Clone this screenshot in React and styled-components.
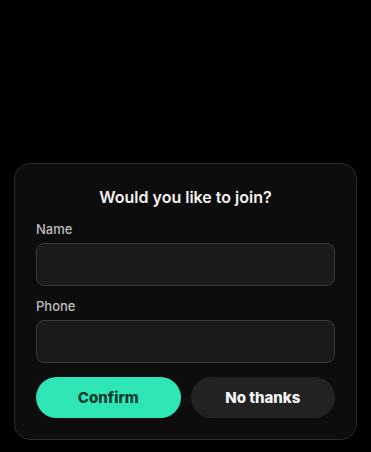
import styled, { createGlobalStyle } from 'styled-components';

const GlobalStyle = createGlobalStyle`
  html, body {
    margin: 0;
    padding: 0;
    background: #000;
  }
  body {
    font-family: Inter, "Noto Sans", "Liberation Sans", sans-serif;
  }
`;

const Screen = styled.div`
  width: 371px;
  height: 452px;
  background: #000;
  display: flex;
  flex-direction: column;
  justify-content: flex-end;
  align-items: center;
  padding-bottom: 12px;
  box-sizing: border-box;
`;

const Card = styled.div`
  width: 343px;
  box-sizing: border-box;
  background: #0d0d0d;
  border: 1px solid #2a2a2a;
  border-radius: 16px;
  padding: 22px 21px 21px;
  display: flex;
  flex-direction: column;
`;

const Title = styled.h2`
  margin: 0 0 13px;
  text-align: center;
  color: #f2f2f2;
  font-size: 16px;
  font-weight: 600;
  line-height: 22px;
`;

const Field = styled.div`
  display: flex;
  flex-direction: column;
  gap: 6px;
  margin-bottom: 12px;
`;

const Label = styled.label`
  color: #bdbdbd;
  font-size: 13px;
  font-weight: 500;
  line-height: 16px;
`;

const Input = styled.input`
  height: 43px;
  box-sizing: border-box;
  background: #1a1a1a;
  border: 1px solid #383838;
  border-radius: 8px;
  color: #fff;
  font-size: 14px;
  padding: 0 12px;

  &:focus {
    outline: none;
  }
`;

const Actions = styled.div`
  display: grid;
  grid-template-columns: 1fr 1fr;
  gap: 10px;
  margin-top: 2px;
`;

const Button = styled.button`
  height: 41px;
  border: none;
  border-radius: 21px;
  font-family: inherit;
  font-size: 15px;
  font-weight: 800;
  cursor: pointer;
  background: ${p => (p.$primary ? '#2ee5b5' : '#222222')};
  color: ${p => (p.$primary ? '#0b3a2e' : '#f5f5f5')};
`;

const App = () => {
  return (
    <>
      <GlobalStyle />
      <Screen>
        <Card>
          <Title>Would you like to join?</Title>
          <Field>
            <Label>Name</Label>
            <Input type='text' />
          </Field>
          <Field>
            <Label>Phone</Label>
            <Input type='tel' />
          </Field>
          <Actions>
            <Button $primary>Confirm</Button>
            <Button>No thanks</Button>
          </Actions>
        </Card>
      </Screen>
    </>
  );
};

export default App;
